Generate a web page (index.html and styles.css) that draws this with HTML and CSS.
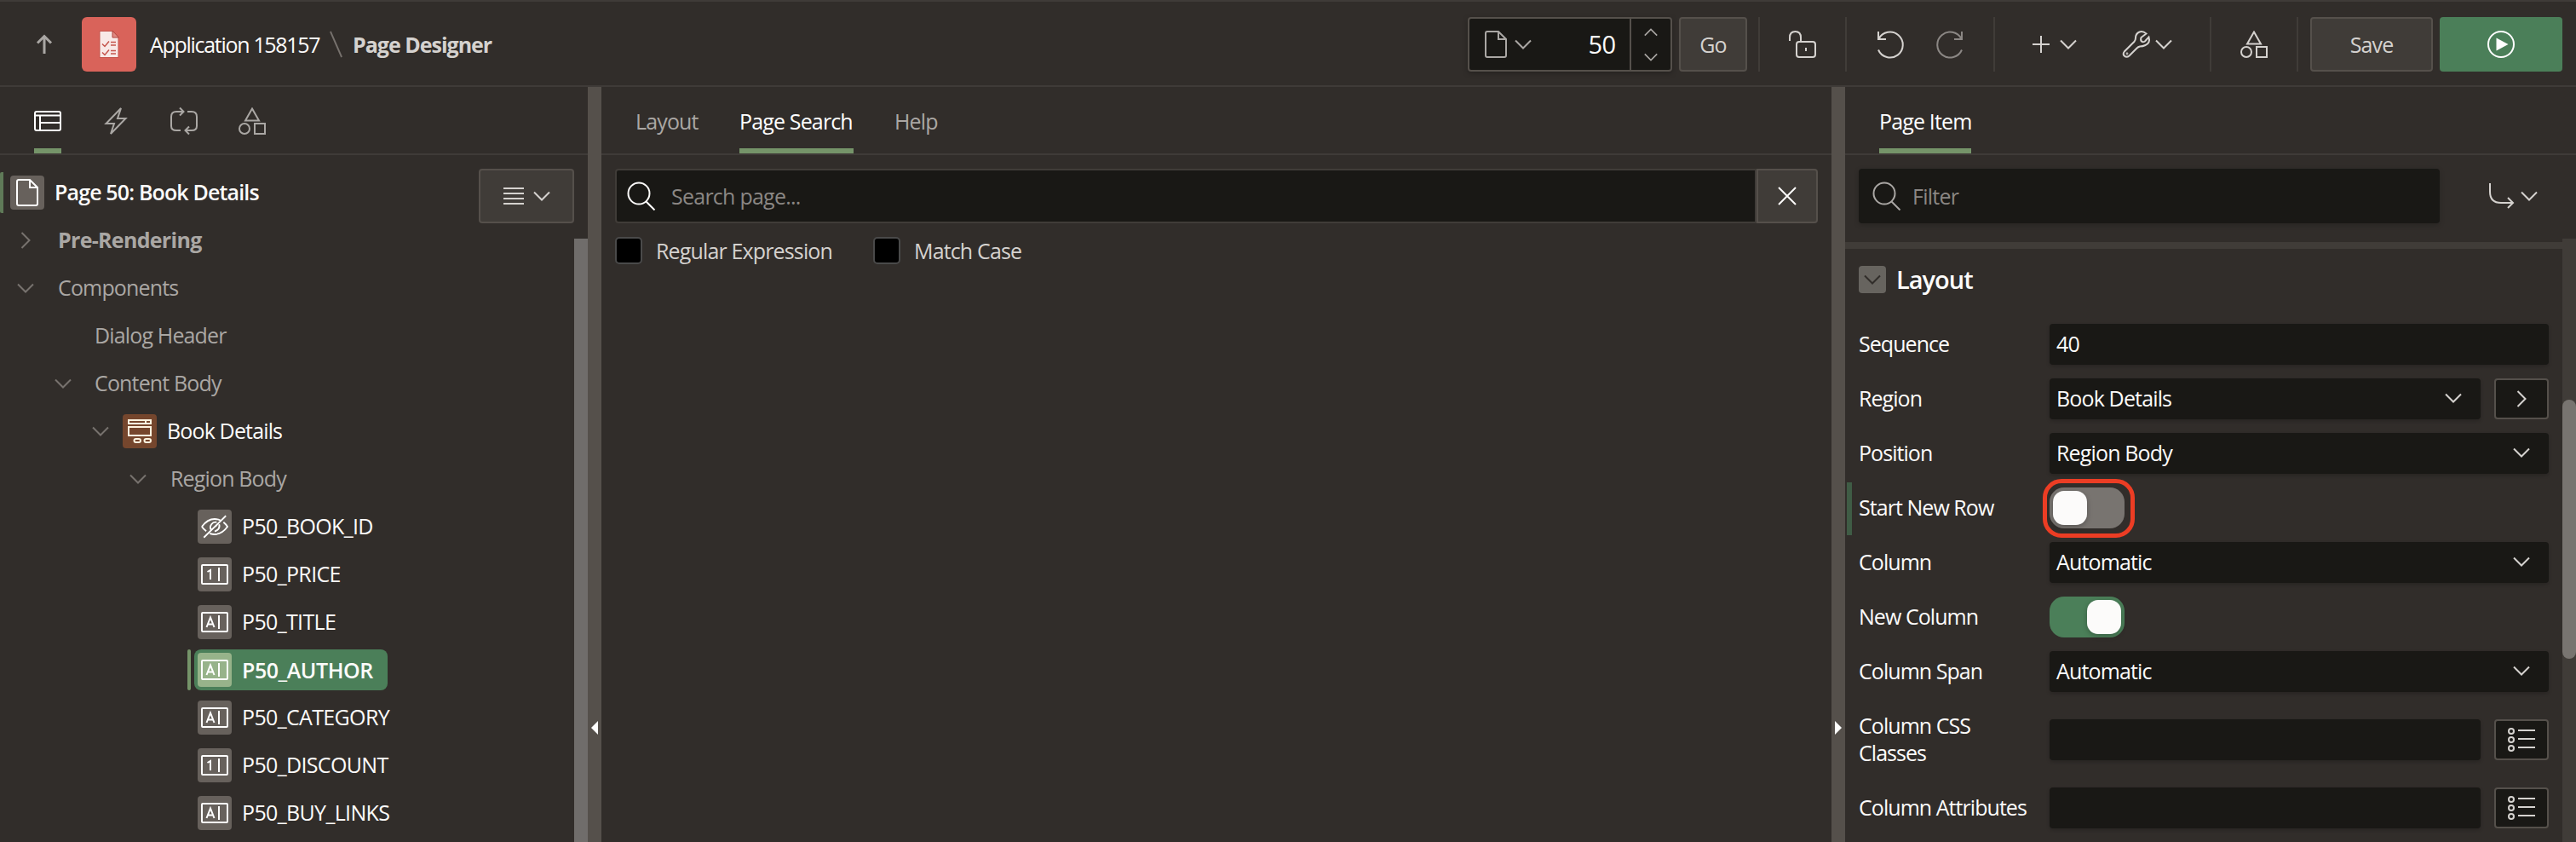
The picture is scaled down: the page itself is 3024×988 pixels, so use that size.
FILE: index.html
```html
<!DOCTYPE html>
<html lang="en">
<head>
<meta charset="utf-8">
<title>Page Designer</title>
<link rel="stylesheet" href="styles.css">
</head>
<body>
<svg class="defs" width="0" height="0">
  <defs>
    <symbol id="down" viewBox="0 0 20 12"><path d="M1 1.500l9 9 9-9"/></symbol>
    <symbol id="right" viewBox="0 0 12 20"><path d="M1.500 1l9 9-9 9"/></symbol>
    <symbol id="file" viewBox="0 0 26 32"><path d="M3 1h13l9 9v19q0 2-2 2H3q-2 0-2-2V3q0-2 2-2zM16 1v9h9"/></symbol>
    <symbol id="shapes" viewBox="0 0 32 32"><path d="M16 1.500l8 14H8zM19 19h12v12H19z"/><circle cx="7" cy="25" r="6"/></symbol>
    <symbol id="search" viewBox="0 0 34 34"><circle cx="14" cy="14" r="12.500"/><path d="M22.500 23.500l10 10"/></symbol>
    <symbol id="num" viewBox="0 0 32 24"><rect x="1" y="1" width="30" height="22" rx="1"/><path d="M7.500 9L11 7v11M21 4v16"/></symbol>
    <symbol id="txt" viewBox="0 0 32 24"><rect x="1" y="1" width="30" height="22" rx="1"/><path d="M6.500 18L11 6.500 15.500 18M8 14.500h6M21 4v16"/></symbol>
    <symbol id="list" viewBox="0 0 32 28"><circle cx="4" cy="4" r="3"/><circle cx="4" cy="14" r="3"/><circle cx="4" cy="24" r="3"/><path d="M12 3h20M12 13h20M12 23h20"/></symbol>
  </defs>
</svg>
<div class="app">
  <header class="header">
    <svg class="ic up" viewBox="0 0 18 22"><path d="M9 22V1.500M1 9.500l8-8 8 8"/></svg>
    <span class="logo"><svg viewBox="0 0 24 32" width="24" height="32"><path class="sheet" d="M1 .5h15l7 7.500v23.500H1z"/><path class="fold" d="M16 0v8h7.500z"/><path class="marks" d="M4 15.500l3 3 5-6M4 25.500l3 3 5-6M14 13.500h6M14 17h6M14 23.500h6M14 27h6"/></svg></span>
    <span class="app-name">Application 158157</span>
    <svg class="ic slash" viewBox="0 0 16 34"><path d="M1 1l14 32"/></svg>
    <span class="crumb">Page Designer</span>
    <div class="pagebox">
      <svg class="ic file" width="26" height="32"><use href="#file"/></svg>
      <svg class="ic chev" width="20" height="12"><use href="#down"/></svg>
      <span class="pageno">50</span>
      <span class="spin"><svg class="ic flip" width="16" height="10"><use href="#down"/></svg><svg class="ic" width="16" height="10"><use href="#down"/></svg></span>
    </div>
    <span class="btn go">Go</span>
    <i class="sep s1"></i>
    <svg class="ic lock" viewBox="0 0 34 32"><path d="M1 12V8q0-7 6.500-7T14 8v5"/><rect x="9" y="13" width="22" height="18" rx="3"/><path d="M20 20v4"/></svg>
    <i class="sep s2"></i>
    <svg class="ic undo" viewBox="0 0 32 32"><path d="M2 1v9h9M2.500 9.500A15 15 0 1 1 2 22.500"/></svg>
    <svg class="ic redo" viewBox="0 0 32 32"><path d="M30 1v9h-9M29.500 9.500A15 15 0 1 0 30 22.500"/></svg>
    <i class="sep s3"></i>
    <svg class="ic plus" viewBox="0 0 20 20"><path d="M10 0v20M0 10h20"/></svg>
    <svg class="ic c1" width="20" height="12"><use href="#down"/></svg>
    <svg class="ic wrench" viewBox="0 0 32 32"><path d="M27.500 3.500l-6 4.500q-1 3 .5 4.500t4 0l4.500-5q2 7-4 9.500-3 1.500-6.500 1.500-2 .5-3.500 2l-9 9q-3 2.500-5.500.3t-.2-5.300l11.500-11.500q1.700-2 1.700-4.500 0-5 4.500-7 4-1.500 8 2z"/><circle cx="5" cy="27" r=".4"/></svg>
    <svg class="ic c2" width="20" height="12"><use href="#down"/></svg>
    <i class="sep s4"></i>
    <svg class="ic shp" width="32" height="32"><use href="#shapes"/></svg>
    <i class="sep s5"></i>
    <span class="btn save">Save</span>
    <span class="btn run"><svg width="32" height="32" viewBox="0 0 32 32"><circle cx="16" cy="16" r="15"/><path d="M10.500 8.500l14 7.500-14 7.500z"/></svg></span>
  </header>
  <main class="main">
    <section class="left">
      <nav class="tabs icons">
        <span class="tab on"><svg class="ic" width="32" height="24" viewBox="0 0 32 24"><path d="M3 1h26q2 0 2 2v18q0 2-2 2H3q-2 0-2-2V3q0-2 2-2zM1 5.500h30M7 5.500V23M7 14h24"/></svg></span>
        <span class="tab"><svg class="ic" width="26" height="32" viewBox="0 0 26 32"><path d="M19 1L1.500 19H11L7 31 24.500 13H15z"/></svg></span>
        <span class="tab"><svg class="ic" width="32" height="32" viewBox="0 0 32 32"><path d="M14 5H7Q1 5 1 11v11q0 5 6 5h5M11 .5l4.500 4.500-4.500 4.500M20 5h5q6 0 6 6v11q0 5-6 5h-8M22 22.500L17.500 27l4.500 4.500"/></svg></span>
        <span class="tab"><svg class="ic" width="32" height="32"><use href="#shapes"/></svg></span>
      </nav>
      <div class="treewrap">
        <div class="tree">
          <div class="row page"><span class="box"><svg class="ic" width="26" height="32"><use href="#file"/></svg></span><b>Page 50: Book Details</b></div>
          <div class="row dim l1"><svg class="ic tw r" width="12" height="20"><use href="#right"/></svg><b class="pre">Pre-Rendering</b></div>
          <div class="row dim l1"><svg class="ic tw" width="20" height="12"><use href="#down"/></svg><span>Components</span></div>
          <div class="row dim l2"><i class="tw"></i><span>Dialog Header</span></div>
          <div class="row dim l2"><svg class="ic tw" width="20" height="12"><use href="#down"/></svg><span>Content Body</span></div>
          <div class="row l3"><svg class="ic tw" width="20" height="12"><use href="#down"/></svg><span class="box brown"><svg class="ic" width="28" height="28" viewBox="0 0 28 28"><path d="M1 1h26v4H1zM21 1v4M1 9h26v10H1z"/><rect x="7.500" y="23" width="7.500" height="4" rx="2"/><rect x="19.500" y="23" width="7.500" height="4" rx="2"/></svg></span><span>Book Details</span></div>
          <div class="row dim l4"><svg class="ic tw" width="20" height="12"><use href="#down"/></svg><span>Region Body</span></div>
          <div class="row item"><span class="box"><svg class="ic" width="32" height="28" viewBox="0 0 34 28"><path d="M1 14Q8 4.500 17 4.500q4 0 7 1.500M28 8.500q3 2.500 5 5.500-7 9.500-16 9.500-3 0-6-1M6.500 19.500Q3 17 1 14M12.500 18a6.500 6.500 0 0 1 7-9.500M22.500 11q2 6-5.500 9M16 15l4-3M3.500 27.500L31 .5"/></svg></span><span>P50_BOOK_ID</span></div>
          <div class="row item"><span class="box"><svg class="ic" width="32" height="24"><use href="#num"/></svg></span><span>P50_PRICE</span></div>
          <div class="row item"><span class="box"><svg class="ic" width="32" height="24"><use href="#txt"/></svg></span><span>P50_TITLE</span></div>
          <div class="row item sel"><div class="pill"><span class="box"><svg class="ic" width="32" height="24"><use href="#txt"/></svg></span><span class="semi">P50_AUTHOR</span></div></div>
          <div class="row item"><span class="box"><svg class="ic" width="32" height="24"><use href="#txt"/></svg></span><span>P50_CATEGORY</span></div>
          <div class="row item"><span class="box"><svg class="ic" width="32" height="24"><use href="#num"/></svg></span><span>P50_DISCOUNT</span></div>
          <div class="row item"><span class="box"><svg class="ic" width="32" height="24"><use href="#txt"/></svg></span><span>P50_BUY_LINKS</span></div>
        </div>
        <div class="treeside">
          <span class="btn menu"><svg class="ic" width="24" height="22" viewBox="0 0 24 22"><path d="M0 2h24M0 8h24M0 14h24M0 20h24"/></svg><svg class="ic" width="20" height="12"><use href="#down"/></svg></span>
          <i class="tbar"></i>
        </div>
      </div>
    </section>
    <div class="split"><i class="tri l"></i></div>
    <section class="center">
      <nav class="tabs"><span class="tab t1">Layout</span><span class="tab on t2">Page Search</span><span class="tab t3">Help</span></nav>
      <div class="searchrow">
        <div class="search"><svg class="ic" width="34" height="34"><use href="#search"/></svg><span class="ph">Search page...</span></div>
        <span class="clear"><svg class="ic" width="22" height="22" viewBox="0 0 22 22"><path d="M1 1l20 20M21 1L1 21"/></svg></span>
      </div>
      <div class="checks"><i class="cb"></i><span class="k1">Regular Expression</span><i class="cb"></i><span class="k2">Match Case</span></div>
    </section>
    <div class="split"><i class="tri rt"></i></div>
    <section class="right">
      <nav class="tabs"><span class="tab on t4">Page Item</span></nav>
      <div class="filterrow">
        <div class="filter"><svg class="ic" width="34" height="34"><use href="#search"/></svg><span class="ph">Filter</span></div>
        <svg class="ic goto" width="30" height="30" viewBox="0 0 30 30"><path d="M1 0v10q0 13 13 13h14M22 17l6 6-6 6"/></svg>
        <svg class="ic" width="20" height="12"><use href="#down"/></svg>
      </div>
      <div class="props">
        <div class="form">
          <div class="group"><span class="tog"><svg class="ic" width="20" height="12"><use href="#down"/></svg></span><span class="gt">Layout</span></div>
          <div class="f"><label>Sequence</label><div class="in">40</div></div>
          <div class="f"><label>Region</label><div class="in">Book Details<svg class="ic" width="20" height="12"><use href="#down"/></svg></div><span class="ib"><svg class="ic" width="12" height="20"><use href="#right"/></svg></span></div>
          <div class="f"><label>Position</label><div class="in">Region Body<svg class="ic" width="20" height="12"><use href="#down"/></svg></div></div>
          <div class="f changed"><label>Start New Row</label><div class="sw"><i></i></div></div>
          <div class="f"><label>Column</label><div class="in">Automatic<svg class="ic" width="20" height="12"><use href="#down"/></svg></div></div>
          <div class="f"><label>New Column</label><div class="sw yes"><i></i></div></div>
          <div class="f"><label>Column Span</label><div class="in">Automatic<svg class="ic" width="20" height="12"><use href="#down"/></svg></div></div>
          <div class="f tall"><label>Column CSS<br>Classes</label><div class="in"></div><span class="ib"><svg class="ic" width="32" height="28"><use href="#list"/></svg></span></div>
          <div class="f"><label>Column Attributes</label><div class="in"></div><span class="ib"><svg class="ic" width="32" height="28"><use href="#list"/></svg></span></div>
        </div>
        <div class="track"><i></i></div>
      </div>
    </section>
  </main>
</div>
</body>
</html>
```
FILE: styles.css
```css
*, *::before, *::after { box-sizing: border-box; }
body { margin: 0; background: #312d2a; color: #fcfbfa; font: 25px/32px "Open Sans", "Noto Sans", sans-serif; letter-spacing: -0.85px; white-space: nowrap; overflow: hidden; }
svg { display: block; flex: none; overflow: visible; }
i { display: block; flex: none; }
b { font-weight: 600; }
.ic { fill: none; stroke: currentColor; stroke-width: 2; }
.defs { position: absolute; }
.app { width: 3024px; height: 988px; display: flex; flex-direction: column; }
.header { height: 102px; border-top: 2px solid #3f3b38; border-bottom: 2px solid #3f3b38; display: flex; align-items: center; padding: 2px 16px 0 43px; color: #d5d2cf; flex: none; }
.header > * { flex: none; }
.up { width: 18px; height: 22px; color: #aaa7a4; stroke-width: 3; }
.logo { width: 64px; height: 64px; border-radius: 6px; background: #d9635a; display: flex; align-items: center; justify-content: center; margin-left: 35px; }
.sheet { fill: #f8e9e7; stroke: #c4554d; stroke-width: 1; }
.fold { fill: #e08a83; stroke: #b0443d; stroke-width: 1; }
.marks { fill: none; stroke: #c4554d; stroke-width: 1.500; }
.app-name { margin-left: 16px; width: 211px; color: #fcfbfa; letter-spacing: -1.3px; }
.slash { width: 15px; height: 32px; color: #77726e; }
.crumb { font-weight: 700; margin-left: 12px; width: 1309px; letter-spacing: -1px; }
.pagebox { width: 240px; height: 64px; border: 2px solid #55504b; border-radius: 4px; background: #191815; display: flex; align-items: center; padding-left: 18px; color: #aaa7a4; box-shadow: 0 2px 6px #0004; }
.pagebox .chev { margin-left: 9px; }
.pageno { font-size: 29px; font-weight: 500; color: #fcfbfa; width: 99px; text-align: right; letter-spacing: -0.7px; margin-right: 17px; }
.spin { width: 48px; height: 60px; border-left: 2px solid #55504b; display: flex; flex-direction: column; align-items: center; justify-content: space-between; padding: 11px 0 10px; }
.flip { transform: scaleY(-1); }
.btn { height: 64px; border: 2px solid #55504b; border-radius: 4px; background: #403c38; display: flex; align-items: center; justify-content: center; color: #d5d2cf; font-weight: 500; }
.go { width: 80px; margin-left: 8px; }
.sep { width: 2px; height: 64px; background: #403c38; }
.s1 { margin-left: 13px; }
.lock { width: 34px; height: 32px; margin-left: 34px; }
.s2 { margin-left: 32px; }
.undo, .redo { width: 32px; height: 32px; }
.undo { margin-left: 35px; }
.redo { margin-left: 38px; color: #8b8784; }
.s3 { margin-left: 35px; }
.plus { width: 20px; height: 20px; margin-left: 44px; }
.c1 { margin-left: 12px; }
.wrench { width: 32px; height: 32px; margin-left: 54px; }
.c2 { margin-left: 6px; }
.s4 { margin-left: 44px; }
.shp { margin-left: 34px; }
.s5 { margin-left: 34px; }
.save { width: 144px; margin-left: 14px; }
.run { width: 144px; margin-left: 8px; background: #4b7f59; border: 0; }
.run circle { fill: none; stroke: #fff; stroke-width: 2; }
.run path { fill: #fff; }
.main { flex: 1; display: flex; min-height: 0; }
.left { width: 690px; display: flex; flex-direction: column; }
.center { width: 1444px; }
.right { width: 858px; display: flex; flex-direction: column; }
.split { width: 16px; background: #55504b; padding: 744px 0 0 4px; }
.tri { width: 0; height: 0; border: 8px solid transparent; }
.tri.l { border-left: 0; border-right: 8px solid #fff; }
.tri.rt { border-right: 0; border-left: 8px solid #fff; }
.tabs { height: 80px; border-bottom: 2px solid #3f3b38; display: flex; padding-left: 40px; color: #aaa7a4; flex: none; }
.tab { display: flex; align-items: center; border-bottom: 6px solid transparent; padding-top: 7px; font-weight: 400; }
.tab.on { border-color: #759469; color: #fff; font-weight: 500; }
.icons .tab { justify-content: center; width: 32px; margin-right: 48px; padding-top: 8px; }
.t1 { width: 74px; margin-right: 48px; }
.t2 { width: 134px; margin-right: 48px; }
.t4 { width: 108px; }
.treewrap { flex: 1; display: flex; min-height: 0; }
.tree { width: 562px; padding-top: 16px; }
.row { height: 56px; display: flex; align-items: center; }
.row > span:last-child, .row > b { position: relative; top: -1px; }
.dim { color: #aaa7a4; }
.box { width: 40px; height: 40px; border-radius: 4px; background: #67615c; display: flex; align-items: center; justify-content: center; margin-right: 12px; flex: none; color: #fff; }
.brown { background: #75462d; color: #fff4e0; }
.page { padding-left: 8px; height: 48px; border-left: 4px solid #5f7a58; border-radius: 2px; margin: 4px 0; }
.pre { font-weight: 700; letter-spacing: -0.7px; }
.tw { width: 20px; margin-right: 28px; color: #77726e; }
.tw.r { width: 12px; margin: 0 32px 0 4px; }
.l1 { padding-left: 20px; }
.l2 { padding-left: 64px; }
.l2 .tw { margin-right: 27px; }
.l3 { padding-left: 108px; font-weight: 500; }
.l3 .tw { margin-right: 16px; }
.l4 { padding-left: 152px; }
.item { padding-left: 232px; font-weight: 500; letter-spacing: -0.65px; }
.sel { padding-left: 220px; }
.sel .pill { height: 48px; width: 227px; margin-left: 4px; border-radius: 8px; background: #4b7f59; display: flex; align-items: center; padding-left: 4px; }
.sel::before { content: ""; width: 4px; height: 48px; border-radius: 2px; background: #759469; }
.sel .box { background: #97b38a; }
.semi { font-weight: 600; letter-spacing: -0.45px; }
.treeside { width: 128px; padding-top: 16px; display: flex; flex-direction: column; }
.menu { width: 112px; gap: 11px; flex: none; }
.tbar { width: 16px; flex: 1; margin: 18px 0 0 112px; background: #706d6b; }
.searchrow { display: flex; margin: 16px 0 0 16px; }
.search { width: 1340px; height: 64px; border: 2px solid #403c38; border-radius: 4px 0 0 4px; background: #191815; display: flex; align-items: center; padding-left: 12px; }
.ph { color: #8b8784; margin-left: 18px; letter-spacing: -0.75px; }
.clear { width: 72px; height: 64px; border: 2px solid #55504b; border-radius: 0 4px 4px 0; background: #403c38; display: flex; align-items: center; justify-content: center; }
.checks { display: flex; align-items: center; margin: 16px 0 0 16px; color: #d5d2cf; }
.cb { width: 32px; height: 32px; border: 2px solid #4a4a4a; border-radius: 5px; background: #000; margin-right: 16px; }
.k1 { width: 255px; }
.filterrow { display: flex; align-items: center; padding: 16px 0 22px 16px; color: #d5d2cf; }
.filter { width: 682px; height: 64px; border-radius: 4px; background: #191815; display: flex; align-items: center; padding-left: 16px; box-shadow: 0 2px 6px #0003; color: #aaa7a4; }
.filter .ph { margin-left: 13px; }
.goto { margin: 0 7px 0 58px; }
.props { flex: 1; display: flex; min-height: 0; margin-top: -4px; }
.form { width: 842px; padding-top: 4px; overflow: hidden; }
.group { border-top: 8px solid #403c38; height: 88px; display: flex; align-items: center; padding: 0 0 8px 16px; }
.tog { width: 32px; height: 32px; border-radius: 4px; background: #67645f; color: #312d2a; display: flex; align-items: center; justify-content: center; margin-right: 12px; }
.gt { font-size: 29px; font-weight: 600; letter-spacing: -1px; }
.f { height: 64px; display: flex; align-items: center; padding: 0 16px; }
.f.tall { height: 96px; }
.f label { width: 224px; flex: none; letter-spacing: -0.95px; padding-bottom: 2px; }
.in { flex: 1; height: 48px; border-radius: 4px; background: #191815; display: flex; align-items: center; justify-content: space-between; padding: 0 22px 2px 8px; box-shadow: 0 2px 4px #0003; }
.in .ic { color: #d5d2cf; }
.ib { width: 64px; height: 48px; margin-left: 16px; border: 2px solid #55504b; border-radius: 4px; background: #191815; display: flex; align-items: center; justify-content: center; color: #d5d2cf; }
.sw { width: 88px; height: 48px; border-radius: 17px; background: #787470; padding: 4px; }
.sw i { width: 40px; height: 40px; border-radius: 13px; background: #fcfbfa; box-shadow: 0 2px 6px #0004; }
.sw.yes { background: #4b7f59; }
.sw.yes i { margin-left: 40px; }
.changed { position: relative; }
.changed::before { content: ""; position: absolute; left: 2px; top: 2px; width: 6px; height: 62px; background: #3f5c45; }
.changed::after { content: ""; position: absolute; left: 232px; top: -2px; width: 108px; height: 69px; border: 5px solid #ec3d24; border-radius: 22px; }
.track { width: 16px; background: #403c38; padding-top: 189px; }
.track i { width: 16px; height: 304px; border-radius: 8px; background: #787470; }
```
